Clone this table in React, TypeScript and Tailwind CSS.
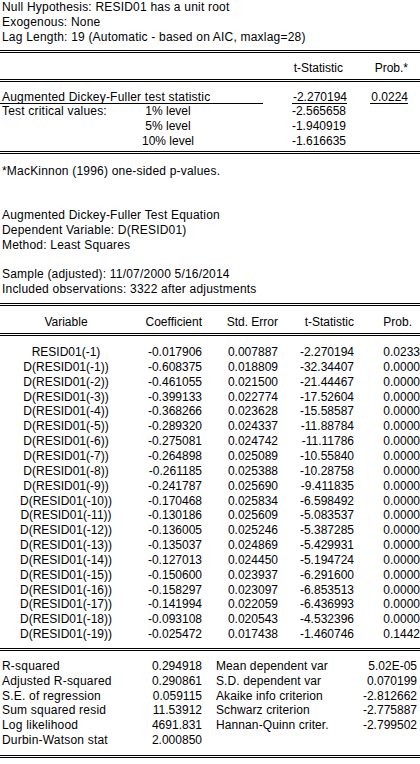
import React from "react";

const rows: [string, string, string, string, string][] = [
  ["RESID01(-1)", "-0.017906", "0.007887", "-2.270194", "0.0233"],
  ["D(RESID01(-1))", "-0.608375", "0.018809", "-32.34407", "0.0000"],
  ["D(RESID01(-2))", "-0.461055", "0.021500", "-21.44467", "0.0000"],
  ["D(RESID01(-3))", "-0.399133", "0.022774", "-17.52604", "0.0000"],
  ["D(RESID01(-4))", "-0.368266", "0.023628", "-15.58587", "0.0000"],
  ["D(RESID01(-5))", "-0.289320", "0.024337", "-11.88784", "0.0000"],
  ["D(RESID01(-6))", "-0.275081", "0.024742", "-11.11786", "0.0000"],
  ["D(RESID01(-7))", "-0.264898", "0.025089", "-10.55840", "0.0000"],
  ["D(RESID01(-8))", "-0.261185", "0.025388", "-10.28758", "0.0000"],
  ["D(RESID01(-9))", "-0.241787", "0.025690", "-9.411835", "0.0000"],
  ["D(RESID01(-10))", "-0.170468", "0.025834", "-6.598492", "0.0000"],
  ["D(RESID01(-11))", "-0.130186", "0.025609", "-5.083537", "0.0000"],
  ["D(RESID01(-12))", "-0.136005", "0.025246", "-5.387285", "0.0000"],
  ["D(RESID01(-13))", "-0.135037", "0.024869", "-5.429931", "0.0000"],
  ["D(RESID01(-14))", "-0.127013", "0.024450", "-5.194724", "0.0000"],
  ["D(RESID01(-15))", "-0.150600", "0.023937", "-6.291600", "0.0000"],
  ["D(RESID01(-16))", "-0.158297", "0.023097", "-6.853513", "0.0000"],
  ["D(RESID01(-17))", "-0.141994", "0.022059", "-6.436993", "0.0000"],
  ["D(RESID01(-18))", "-0.093108", "0.020543", "-4.532396", "0.0000"],
  ["D(RESID01(-19))", "-0.025472", "0.017438", "-1.460746", "0.1442"],
];

const stats: [string, string, string, string][] = [
  ["R-squared", "0.294918", "Mean dependent var", "5.02E-05"],
  ["Adjusted R-squared", "0.290861", "S.D. dependent var", "0.070199"],
  ["S.E. of regression", "0.059115", "Akaike info criterion", "-2.812662"],
  ["Sum squared resid", "11.53912", "Schwarz criterion", "-2.775887"],
  ["Log likelihood", "4691.831", "Hannan-Quinn criter.", "-2.799502"],
  ["Durbin-Watson stat", "2.000850", "", ""],
];

const DoubleRule = ({ className = "" }: { className?: string }) => (
  <div className={"h-[3px] border-y border-black " + className} />
);

// plain left-aligned line of the output
const Line = ({ children }: { children?: React.ReactNode }) => (
  <div className="h-[14.85px] leading-[14.85px] pl-[2px] whitespace-nowrap tracking-[0.2px]">{children}</div>
);

export default function App() {
  return (
    <div className="w-[420px] h-[764px] overflow-hidden bg-white text-black text-[12px] font-['Liberation_Sans',Arial,sans-serif]">
      <Line>Null Hypothesis: RESID01 has a unit root</Line>
      <Line>Exogenous: None</Line>
      <Line>Lag Length: 19 (Automatic - based on AIC, maxlag=28)</Line>

      <DoubleRule className="mt-[5.5px]" />
      <div className="mt-[7.6px] flex h-[14.85px] leading-[14.85px] whitespace-nowrap">
        <div className="w-[343px] text-right">t-Statistic</div>
        <div className="w-[65px] text-right">Prob.*</div>
      </div>
      <DoubleRule className="mt-[3.5px]" />

      <div className="mt-[7.6px] flex h-[14.85px] leading-[14.85px] whitespace-nowrap">
        <div className="w-[263px] pl-[2px] border-b border-black tracking-[0.2px]">Augmented Dickey-Fuller test statistic</div>
        <div className="ml-[29px] w-[55px] text-right border-b border-black">-2.270194</div>
        <div className="ml-[23px] w-[38px] text-right border-b border-black">0.0224</div>
      </div>
      {[
        ["Test critical values:", "1% level", "-2.565658"],
        ["", "5% level", "-1.940919"],
        ["", "10% level", "-1.616635"],
      ].map(([a, b, c], i) => (
        <div key={i} className="flex h-[14.85px] leading-[14.85px] whitespace-nowrap">
          <div className="w-[136px] pl-[2px] tracking-[0.2px]">{a}</div>
          <div className="w-[64px] text-center">{b}</div>
          <div className="w-[146px] text-right">{c}</div>
        </div>
      ))}
      <DoubleRule className="mt-[2px]" />

      <div className="mt-[9.6px]">
        <Line>*MacKinnon (1996) one-sided p-values.</Line>
        <Line />
        <Line />
        <Line>Augmented Dickey-Fuller Test Equation</Line>
        <Line>Dependent Variable: D(RESID01)</Line>
        <Line>Method: Least Squares</Line>
        <Line />
        <Line>Sample (adjusted): 11/07/2000 5/16/2014</Line>
        <Line>Included observations: 3322 after adjustments</Line>
      </div>

      <DoubleRule className="mt-[6px]" />
      <div className="mt-[8.8px] flex h-[14.85px] leading-[14.85px] whitespace-nowrap">
        <div className="w-[132px] text-center">Variable</div>
        <div className="w-[70px] text-right">Coefficient</div>
        <div className="w-[76px] text-right">Std. Error</div>
        <div className="w-[76px] text-right">t-Statistic</div>
        <div className="w-[58px] text-right">Prob.</div>
      </div>
      <DoubleRule className="mt-[3px]" />

      <div className="mt-[9.3px]">
        {rows.map((r) => (
          <div key={r[0]} className="flex h-[14.85px] leading-[14.85px] whitespace-nowrap">
            <div className="w-[132px] text-center">{r[0]}</div>
            <div className="w-[70px] text-right">{r[1]}</div>
            <div className="w-[76px] text-right">{r[2]}</div>
            <div className="w-[76px] text-right">{r[3]}</div>
            <div className="w-[66px] text-right">{r[4]}</div>
          </div>
        ))}
      </div>

      <DoubleRule className="mt-[6.2px]" />
      <div className="mt-[7.8px]">
        {stats.map((s) => (
          <div key={s[0]} className="flex h-[14.85px] leading-[14.85px] whitespace-nowrap">
            <div className="w-[130px] pl-[2px] tracking-[0.2px]">{s[0]}</div>
            <div className="w-[72px] text-right">{s[1]}</div>
            <div className="w-[134px] pl-[14px] tracking-[0.1px]">{s[2]}</div>
            <div className="w-[81px] text-right">{s[3]}</div>
          </div>
        ))}
      </div>
      <DoubleRule className="mt-[6.6px]" />
    </div>
  );
}
